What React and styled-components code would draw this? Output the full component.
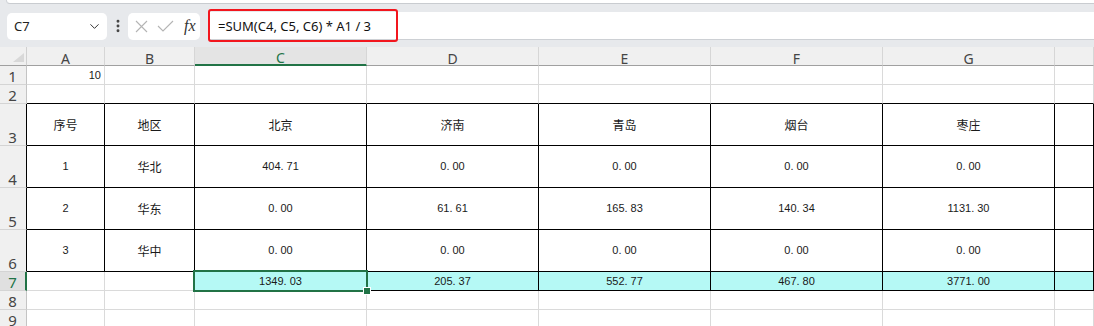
// 表格截图：公式栏 + 工作表
import React from 'react'
import styled, { createGlobalStyle } from 'styled-components'
import { ChevronDown, EllipsisVertical } from 'lucide-react'

const GRID = '#dadada'
const GREEN = '#217346'
const CYAN = '#b5f9f5'

const GlobalStyle = createGlobalStyle`
    html, body {
        margin: 0;
        padding: 0;
        background: #fff;
        overflow: hidden;
    }
    body {
        font-family: 'Noto Sans', 'Noto Sans CJK SC', sans-serif;
    }
`

const MyPage = styled.div`
    width: 1094px;
    height: 326px;
    overflow: hidden;
    background: #fff;
`
const MyTopBar = styled.div`
    background: #e7e9ec;
`
const MyRibbonEdge = styled.div`
    height: 3px;
    margin-left: 6px;
    background: #fff;
    border-left: 1px solid #cfd2d6;
    border-bottom: 1px solid #c9ccd0;
    border-bottom-left-radius: 6px;
`
const MyFormulaRow = styled.div`
    display: flex;
    align-items: center;
    height: 43px;
    padding: 8px 0 7px 7px;
    box-sizing: border-box;
`
const MyNameBox = styled.div`
    box-sizing: border-box;
    width: 100px;
    height: 27px;
    display: flex;
    align-items: center;
    justify-content: space-between;
    padding: 0 5px 0 7px;
    background: #fff;
    border-radius: 5px;
    font-size: 13px;
    color: #222;
`
const MyDots = styled.div`
    width: 21px;
    display: flex;
    justify-content: center;
    color: #444;
`
const MyActions = styled.div`
    box-sizing: border-box;
    width: 72px;
    height: 27px;
    display: flex;
    align-items: center;
    gap: 9px;
    padding-left: 7px;
    background: #fff;
    border-radius: 5px;
`
const MyFx = styled.span`
    font-family: 'Liberation Serif', serif;
    font-style: italic;
    font-size: 16px;
    color: #333;
    margin-left: 1px;
`
const MyFormula = styled.div`
    flex: 1;
    margin-left: 8px;
    height: 28px;
    position: relative;
    display: flex;
    align-items: center;
    padding-left: 10px;
    background: #fff;
    border-bottom: 1px solid #cdd0d4;
    box-sizing: border-box;
    font-size: 13px;
    color: #111;
`
const MyMark = styled.div`
    position: absolute;
    left: 0;
    top: -3px;
    width: 190px;
    height: 33px;
    box-sizing: border-box;
    border: 2px solid #f2161e;
    border-radius: 3px;
`
const MySheet = styled.div`
    display: grid;
    grid-template-columns: 27px 78px 90px repeat(5, 172px) 1fr;
    grid-template-rows: 19px 19px 19px 42px 42px 42px 42px 19px 19px 19px;
`
const MyCorner = styled.div`
    position: relative;
    background: #f0f0f0;
    border-right: 1px solid #d0d0d0;
    border-bottom: 1px solid #a0a0a0;
    &::after {
        content: '';
        position: absolute;
        right: 2px;
        bottom: 3px;
        border-left: 11px solid transparent;
        border-bottom: 9px solid #d8d8d8;
    }
`
const MyColHead = styled.div`
    display: flex;
    justify-content: center;
    align-items: flex-end;
    background: ${props => (props.$sel ? '#e4e4e4' : '#f0f0f0')};
    border-right: 1px solid #d6d6d6;
    border-bottom: ${props => (props.$sel ? `2px solid ${GREEN}` : '1px solid #a0a0a0')};
    color: ${props => (props.$sel ? GREEN : '#454545')};
    font-size: 14px;
    line-height: 12px;
`
const MyRowHead = styled.div`
    display: flex;
    justify-content: center;
    align-items: flex-end;
    overflow: hidden;
    padding-right: ${props => (props.$sel ? '0' : '1px')};
    background: ${props => (props.$sel ? '#e0e0e0' : '#f0f0f0')};
    border-right: ${props => (props.$sel ? `2px solid ${GREEN}` : `1px solid ${props.$edge ? '#000' : '#c4c4c4'}`)};
    border-bottom: 1px solid #d4d4d4;
    color: ${props => (props.$sel ? GREEN : '#454545')};
    font-size: 15px;
    line-height: 15px;
`
const MyCell = styled.div`
    position: relative;
    display: flex;
    align-items: center;
    justify-content: ${props => props.$align || 'center'};
    padding-right: ${props => (props.$align ? '3px' : '0')};
    background: ${props => props.$fill || '#fff'};
    border-right: 1px solid ${props => props.$right};
    border-bottom: 1px solid ${props => props.$bottom};
    font-family: ${props =>
        props.$cjk ? "'Noto Sans CJK SC', sans-serif" : "'Liberation Sans', 'Noto Sans CJK SC', sans-serif"};
    font-size: ${props => (props.$cjk ? '12px' : '11px')};
    line-height: 1;
    color: #1a1a1a;
`
const MyFrac = styled.span`
    margin-left: 3px;
`
const MySelect = styled.div`
    position: absolute;
    z-index: 2;
    left: -2px;
    top: -2px;
    right: -2px;
    bottom: -2px;
    border: 2px solid ${GREEN};
    pointer-events: none;
    &::after {
        content: '';
        position: absolute;
        right: -5px;
        bottom: -5px;
        width: 6px;
        height: 6px;
        background: ${GREEN};
        border: 1px solid #fff;
    }
`

const cols = ['A', 'B', 'C', 'D', 'E', 'F', 'G', 'H']

const data = {
    1: ['10'],
    3: ['序号', '地区', '北京', '济南', '青岛', '烟台', '枣庄', ''],
    4: ['1', '华北', '404.71', '0.00', '0.00', '0.00', '0.00', ''],
    5: ['2', '华东', '0.00', '61.61', '165.83', '140.34', '1131.30', ''],
    6: ['3', '华中', '0.00', '0.00', '0.00', '0.00', '0.00', ''],
    7: ['', '', '1349.03', '205.37', '552.77', '467.80', '3771.00', ''],
}

const Value = ({ text }) => {
    if (!text.includes('.')) return text
    const [int, frac] = text.split('.')
    return (
        <>
            {int}.<MyFrac>{frac}</MyFrac>
        </>
    )
}

function App() {
    const rows = [1, 2, 3, 4, 5, 6, 7, 8, 9]
    return (
        <MyPage>
            <GlobalStyle />
            <MyTopBar>
                <MyRibbonEdge />
                <MyFormulaRow>
                    <MyNameBox>
                        C7
                        <ChevronDown size={15} strokeWidth={1.6} color='#333' />
                    </MyNameBox>
                    <MyDots>
                        <EllipsisVertical size={16} strokeWidth={2.4} />
                    </MyDots>
                    <MyActions>
                        <svg width='13' height='13' viewBox='0 0 13 13'>
                            <path d='M1 1 L12 12 M12 1 L1 12' stroke='#b4b4b4' strokeWidth='1.1' fill='none' />
                        </svg>
                        <svg width='17' height='12' viewBox='0 0 17 12'>
                            <path d='M1 6 L6 11 L16 1' stroke='#b4b4b4' strokeWidth='1.1' fill='none' />
                        </svg>
                        <MyFx>fx</MyFx>
                    </MyActions>
                    <MyFormula>
                        =SUM(C4, C5, C6) * A1 / 3
                        <MyMark />
                    </MyFormula>
                </MyFormulaRow>
            </MyTopBar>
            <MySheet>
                <MyCorner />
                {cols.map(c => (
                    <MyColHead key={c} $sel={c === 'C'}>
                        {c === 'H' ? '' : c}
                    </MyColHead>
                ))}
                {rows.map(r => (
                    <React.Fragment key={r}>
                        <MyRowHead $sel={r === 7} $edge={r >= 3 && r <= 6}>
                            {r}
                        </MyRowHead>
                        {cols.map((c, i) => {
                            const table = r >= 3 && r <= 6
                            const total = r === 7 && i >= 2
                            const text = (data[r] && data[r][i]) || ''
                            const right = table || total || (r === 7 && i === 1) ? '#000' : GRID
                            const bottom = table || total || r === 2 ? '#000' : GRID
                            return (
                                <MyCell
                                    key={c}
                                    $right={right}
                                    $bottom={bottom}
                                    $fill={total ? CYAN : null}
                                    $align={r === 1 ? 'flex-end' : null}
                                    $cjk={/[\u4e00-\u9fa5]/.test(text)}
                                >
                                    <Value text={text} />
                                    {r === 7 && c === 'C' && <MySelect />}
                                </MyCell>
                            )
                        })}
                    </React.Fragment>
                ))}
            </MySheet>
        </MyPage>
    )
}

export default App
